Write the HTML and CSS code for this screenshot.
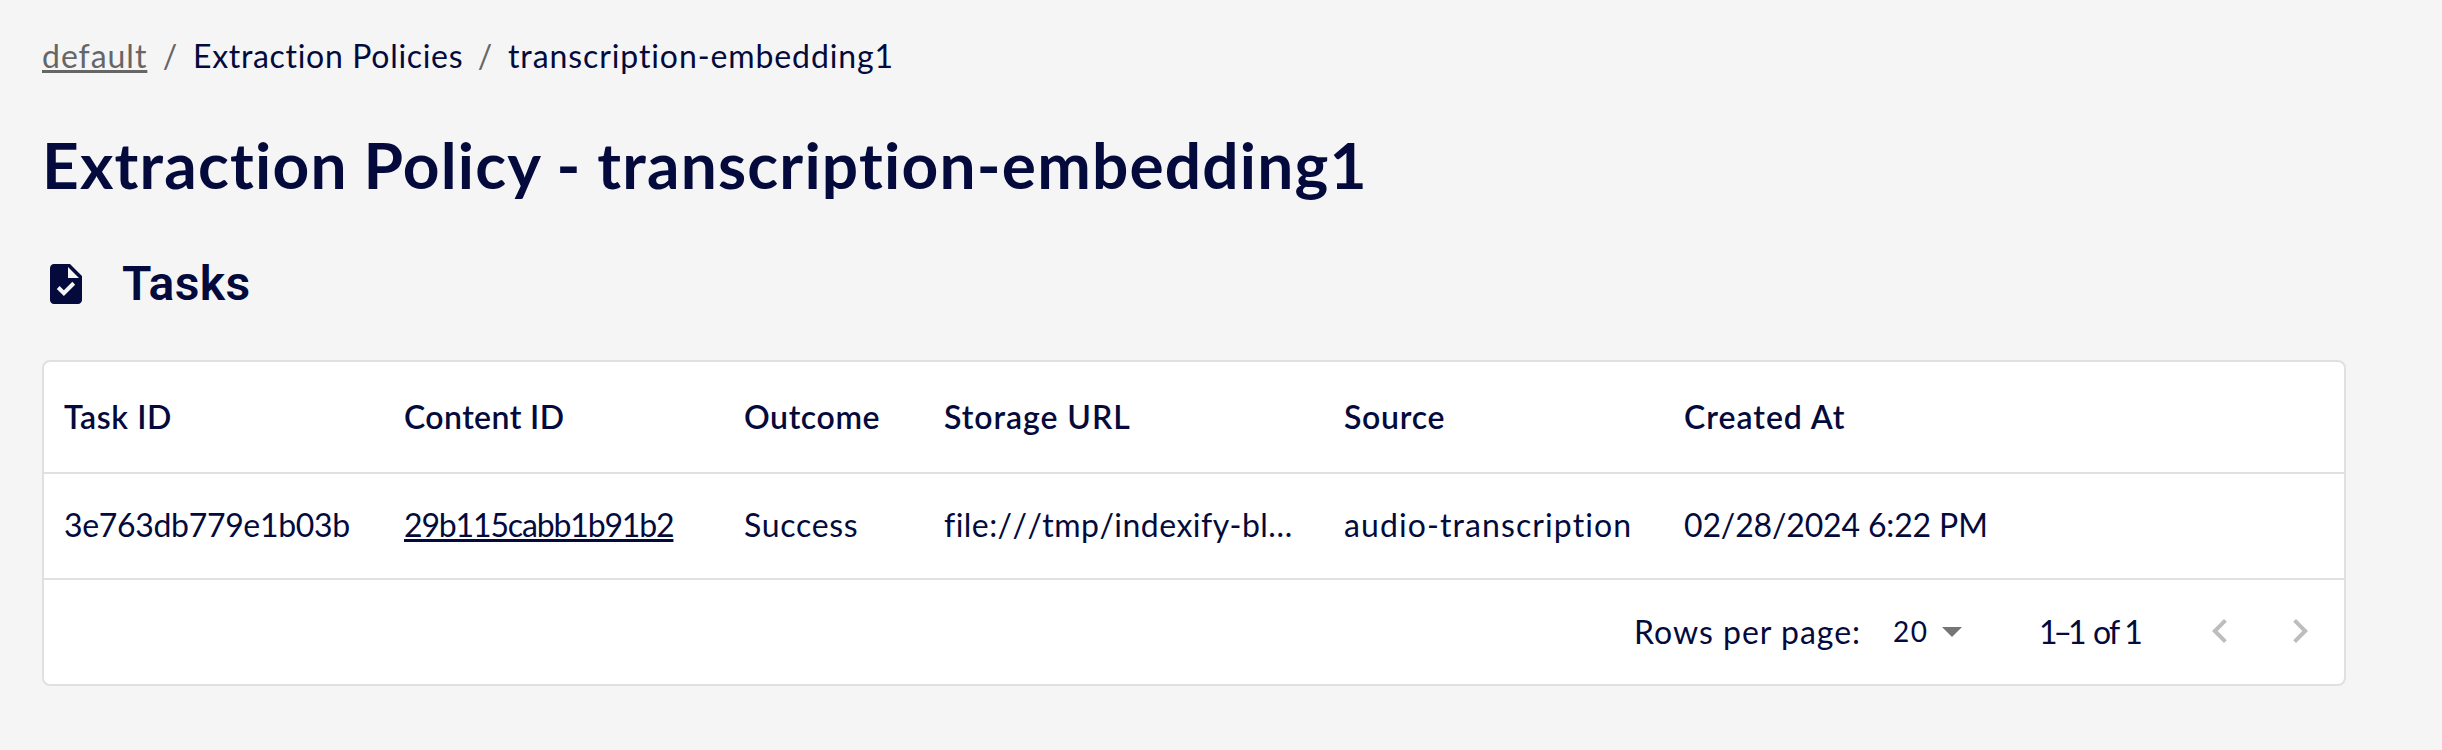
FILE: index.html
```
<!DOCTYPE html>
<html lang="en">
<head>
<meta charset="utf-8">
<title>Extraction Policy</title>
<link rel="stylesheet" href="styles.css">
</head>
<body>
<main class="page">
  <nav class="crumbs">
    <a class="crumb crumb-link">default</a>
    <span class="sep">/</span>
    <span class="crumb crumb-section">Extraction Policies</span>
    <span class="sep">/</span>
    <span class="crumb crumb-current">transcription-embedding1</span>
  </nav>
  <h1 class="title">Extraction Policy - transcription-embedding1</h1>
  <h2 class="section">
    <svg class="task-icon" viewBox="0 0 24 24"><path d="M14 2H6c-1.1 0-1.99.9-1.99 2L4 20c0 1.100.89 2 1.990 2H18c1.100 0 2-.9 2-2V8l-6-6zm-3.060 16L7.400 14.460l1.410-1.410 2.120 2.120 4.240-4.240 1.410 1.410L10.940 18zM13 9V3.500L18.500 9H13z"/></svg>
    <span>Tasks</span>
  </h2>
  <section class="grid">
    <div class="row head">
      <div class="cell h-task">Task ID</div>
      <div class="cell h-content">Content ID</div>
      <div class="cell h-outcome">Outcome</div>
      <div class="cell h-storage">Storage URL</div>
      <div class="cell h-source">Source</div>
      <div class="cell h-created">Created At</div>
    </div>
    <div class="row body">
      <div class="cell c-task">3e763db779e1b03b</div>
      <div class="cell"><a class="c-content">29b115cabb1b91b2</a></div>
      <div class="cell c-outcome">Success</div>
      <div class="cell c-storage">file:///tmp/indexify-bl…</div>
      <div class="cell c-source">audio-transcription</div>
      <div class="cell c-created">02/28/2024 6:22 PM</div>
    </div>
    <div class="footer">
      <span class="rows-label">Rows per page:</span>
      <span class="select">20</span>
      <svg class="caret" viewBox="0 0 20 10"><path d="M0 0h20L10 10z"/></svg>
      <span class="range"><span class="span">1–1</span> of 1</span>
      <svg class="chevron" viewBox="0 0 24 24"><path d="M15.410 7.410L14 6l-6 6 6 6 1.410-1.410L10.830 12z"/></svg>
      <svg class="chevron" viewBox="0 0 24 24"><path d="M8.590 16.590L13.170 12 8.590 7.410 10 6l6 6-6 6z"/></svg>
    </div>
  </section>
</main>
</body>
</html>
```
FILE: styles.css
```
* { box-sizing: border-box; }
body {
  margin: 0;
  background: #f5f5f5;
  color: #040b3c;
  font: 400 32px/48px Lato, sans-serif;
}
.page { padding: 32px 96px 0 42px; }

.crumbs { display: flex; height: 48px; white-space: nowrap; }
.crumb-link { width: 105px; color: #666; letter-spacing: .97px; text-decoration: underline; text-decoration-thickness: 3px; text-underline-offset: 2px; text-decoration-skip-ink: none; }
.sep { width: 46px; color: #666; text-align: center; }
.crumb-section { width: 269px; letter-spacing: .68px; }
.crumb-current { letter-spacing: .9px; }

.title { margin: 45px 0 0; font-size: 64px; line-height: 80px; font-weight: 700; letter-spacing: 1.2px; word-spacing: -1px; white-space: nowrap; }
.section { display: flex; align-items: center; gap: 32px; height: 60px; margin: 49px 0 46px; font: 600 48px/60px Roboto, sans-serif; letter-spacing: .4px; }
.task-icon { width: 48px; height: 48px; fill: currentColor; }

.grid { height: 326px; border: 2px solid #e0e0e0; border-radius: 8px; background: #fff; }
.row { display: grid; grid-template-columns: 340px 340px 200px 400px 340px 1fr; align-items: center; border-bottom: 2px solid #e0e0e0; white-space: nowrap; }
.cell { padding: 0 20px; }
.head { height: 112px; font-weight: 600; }
.body { height: 106px; padding-bottom: 2px; }
.h-task { letter-spacing: .6px; }
.h-content { letter-spacing: .4px; }
.h-outcome { letter-spacing: .6px; }
.h-storage { letter-spacing: .95px; }
.h-source { letter-spacing: .7px; }
.h-created { letter-spacing: 1px; }
.c-task { letter-spacing: -.33px; }
.c-content { letter-spacing: -1.15px; text-decoration: underline; text-decoration-thickness: 3px; text-underline-offset: 2px; text-decoration-skip-ink: none; }
.c-outcome { letter-spacing: .7px; }
.c-storage { letter-spacing: .45px; font-kerning: none; }
.c-source { letter-spacing: 1.1px; }
.c-created { letter-spacing: -.15px; }

.footer { display: flex; align-items: center; justify-content: flex-end; height: 104px; padding-right: 20px; white-space: nowrap; }
.rows-label { width: 259px; letter-spacing: 1px; }
.select { width: 49px; padding-bottom: 3px; font-size: 28px; letter-spacing: 1.5px; }
.caret { width: 20px; height: 10px; margin-right: 77px; fill: #757575; }
.range { width: 157px; letter-spacing: -1.8px; }
.span { margin-right: 4px; letter-spacing: -4px; }
.chevron { width: 48px; height: 48px; margin: 0 0 2px; fill: #bdbdbd; }
.chevron + .chevron { margin-left: 32px; }
```
